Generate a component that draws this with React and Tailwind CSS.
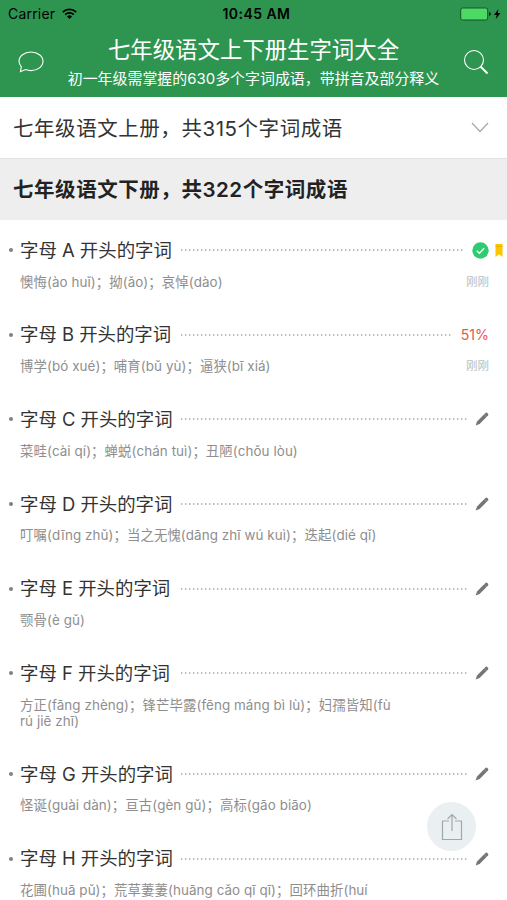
import clsx from "clsx";

const items = [
  { letter: "A", desc: "懊悔(ào huǐ)；拗(ǎo)；哀悼(dào)", status: "done", time: "刚刚" },
  { letter: "B", desc: "博学(bó xué)；哺育(bǔ yù)；逼狭(bī xiá)", status: "51%", time: "刚刚" },
  { letter: "C", desc: "菜畦(cài qí)；蝉蜕(chán tuì)；丑陋(chǒu lòu)" },
  { letter: "D", desc: "叮嘱(dīng zhǔ)；当之无愧(dāng zhī wú kuì)；迭起(dié qǐ)" },
  { letter: "E", desc: "颚骨(è gǔ)" },
  { letter: "F", desc: "方正(fāng zhèng)；锋芒毕露(fēng máng bì lù)；妇孺皆知(fù rú jiē zhī)" },
  { letter: "G", desc: "怪诞(guài dàn)；亘古(gèn gǔ)；高标(gāo biāo)" },
  { letter: "H", desc: "花圃(huā pǔ)；荒草萋萋(huāng cǎo qī qī)；回环曲折(huí" },
];

function StatusBar() {
  return (
    <div className="h-[27px] px-2 grid grid-cols-3 items-center text-black text-[14px]">
      <div className="flex items-center gap-[7px]">
        <span className="tracking-[0.2px]">Carrier</span>
        <svg width="15" height="11" viewBox="0 0 15 11" fill="none" stroke="black" strokeWidth="1.9">
          <path d="M0.8 4.1a9.6 9.6 0 0 1 13.4 0" />
          <path d="M3.2 6.6a6.2 6.2 0 0 1 8.6 0" />
          <path d="M7.5 11L5 8.5a3.5 3.5 0 0 1 5 0z" fill="black" stroke="none" />
        </svg>
      </div>
      <span className="text-center pl-[6px] font-semibold tracking-[0.45px] whitespace-nowrap">10:45 AM</span>
      <svg className="justify-self-end -mr-[3px]" width="42" height="14" viewBox="0 0 42 14">
        <rect x="0.7" y="1" width="27" height="12" rx="2" fill="#4cd964" stroke="#14552c" />
        <path d="M29 5v4q2-.5 2-2t-2-2z" fill="#0b3018" />
        <path d="M38.5 2l-4.5 6h2.7l-1 4.3 4.8-6.2h-2.9z" fill="black" />
      </svg>
    </div>
  );
}

function Header() {
  return (
    <header className="h-[97px] bg-[#2e9551] text-white">
      <StatusBar />
      <div className="flex items-center justify-between h-[70px] px-[18px]">
        <svg width="26" height="22" viewBox="0 0 26 22" fill="none" stroke="white" strokeWidth="1.1">
          <path d="M3.3 15.6C1.8 13.9 1 12.2 1 10.3 1 5.2 6.3 1 13 1s12 4.2 12 9.3-5.3 9.3-12 9.3c-2 0-3.8-.4-5.4-1L2.5 20.7z" />
        </svg>
        <div className="text-center whitespace-nowrap pt-[4px]">
          <h1 className="text-[22.4px] leading-[30px]">七年级语文上下册生字词大全</h1>
          <p className="text-[14.95px] leading-[28px]">初一年级需掌握的630多个字词成语，带拼音及部分释义</p>
        </div>
        <svg width="26" height="26" viewBox="0 0 26 26" fill="none" stroke="white">
          <circle cx="11" cy="11" r="9.5" strokeWidth="1.1" />
          <path d="M17.5 17.5l7 7" strokeWidth="2" />
        </svg>
      </div>
    </header>
  );
}

function PencilIcon() {
  return (
    <svg width="14" height="14" viewBox="0 0 14 14" fill="#757575">
      <path d="M10.4 1q1-.8 2 .1l.6.6q.8.9 0 1.900L4.600 12 .6 13.500 2 9.500z" />
      <path d="M9.200 2.200l2.700 2.700" stroke="#a5a5a5" strokeWidth=".6" />
    </svg>
  );
}

function Status({ status }) {
  if (status === "done") {
    return (
      <div className="flex items-center gap-[6px] -mr-[14px]">
        <svg width="17" height="17" viewBox="0 0 17 17" fill="none">
          <circle cx="8.5" cy="8.5" r="8.2" fill="#2ecc71" />
          <path d="M4.8 8.8l2.6 2.5 4.7-5" stroke="white" strokeWidth="1.3" />
        </svg>
        <svg width="8" height="13" viewBox="0 0 8 13">
          <path d="M.5 0h7v13L4 10.3.5 13z" fill="#ffc400" />
          <path d="M.5 2.5h7" stroke="#e5ae00" strokeWidth=".8" />
        </svg>
      </div>
    );
  }
  if (status) return <span className="text-[14.2px] text-[#e8584c]">{status}</span>;
  return <PencilIcon />;
}

function WordItem({ item }) {
  return (
    <li className="pt-[18px] pb-[15.17px] pl-[20px] pr-[18px]">
      <div className="flex items-center h-6 -ml-[11px]">
        <span className="size-1 rounded-full bg-[#808080] mr-[7px] shrink-0" />
        <h3 className="pt-px text-[18.4px] text-[#333] whitespace-nowrap min-w-[154px]">
          字母 {item.letter} 开头的字词
        </h3>
        <svg className={clsx("flex-1 h-[2px] ml-[7px]", item.status ? "mr-[8px]" : "mr-[7px]")}>
          <line x1="0" y1="1" x2="100%" y2="1" stroke="#a6a6a6" strokeWidth="1.3" strokeDasharray="1.4 2.6" />
        </svg>
        <Status status={item.status} />
      </div>
      <div className="flex justify-between mt-[11.5px]">
        <p className="w-[382px] text-[13.4px] tracking-[0.08px] leading-4 text-[#8e8e8e]">{item.desc}</p>
        {item.time && <span className="text-[11.5px] leading-4 text-[#b8c0c0]">{item.time}</span>}
      </div>
    </li>
  );
}

export default function App() {
  return (
    <div className="relative w-[507px] h-[900px] overflow-hidden bg-white font-['Inter','Noto_Sans_CJK_SC',sans-serif]">
      <Header />
      <div className="h-[61px] pl-[13px] pr-[18px] flex items-center justify-between text-[20.5px] tracking-[0.55px] text-[#333]">
        <h2 className="pt-[3px]">七年级语文上册，共315个字词成语</h2>
        <svg width="18" height="11" viewBox="0 0 18 11" fill="none" stroke="#a3acac" strokeWidth="1.3">
          <path d="M1 1l8 8.5L17 1" />
        </svg>
      </div>
      <div className="h-[62px] pl-[13px] flex items-center bg-[#eee] border-t border-[#e2e2e2] text-[20.5px] tracking-[0.55px] text-[#222]">
        <h2 className="font-semibold pt-[2px]">七年级语文下册，共322个字词成语</h2>
      </div>
      <ul>
        {items.map((item) => (
          <WordItem key={item.letter} item={item} />
        ))}
      </ul>

      <button className="absolute left-[427px] top-[802px] size-[49px] rounded-full bg-[#eaf0f1] flex items-center justify-center">
        <svg width="22" height="28" viewBox="0 0 22 28" fill="none" stroke="#9caaaa" strokeWidth="1.2">
          <path d="M8 8H1.5v18.5h19V8H14" />
          <path d="M11 18V1.5M6.5 6L11 1.5 15.5 6" />
        </svg>
      </button>
    </div>
  );
}
